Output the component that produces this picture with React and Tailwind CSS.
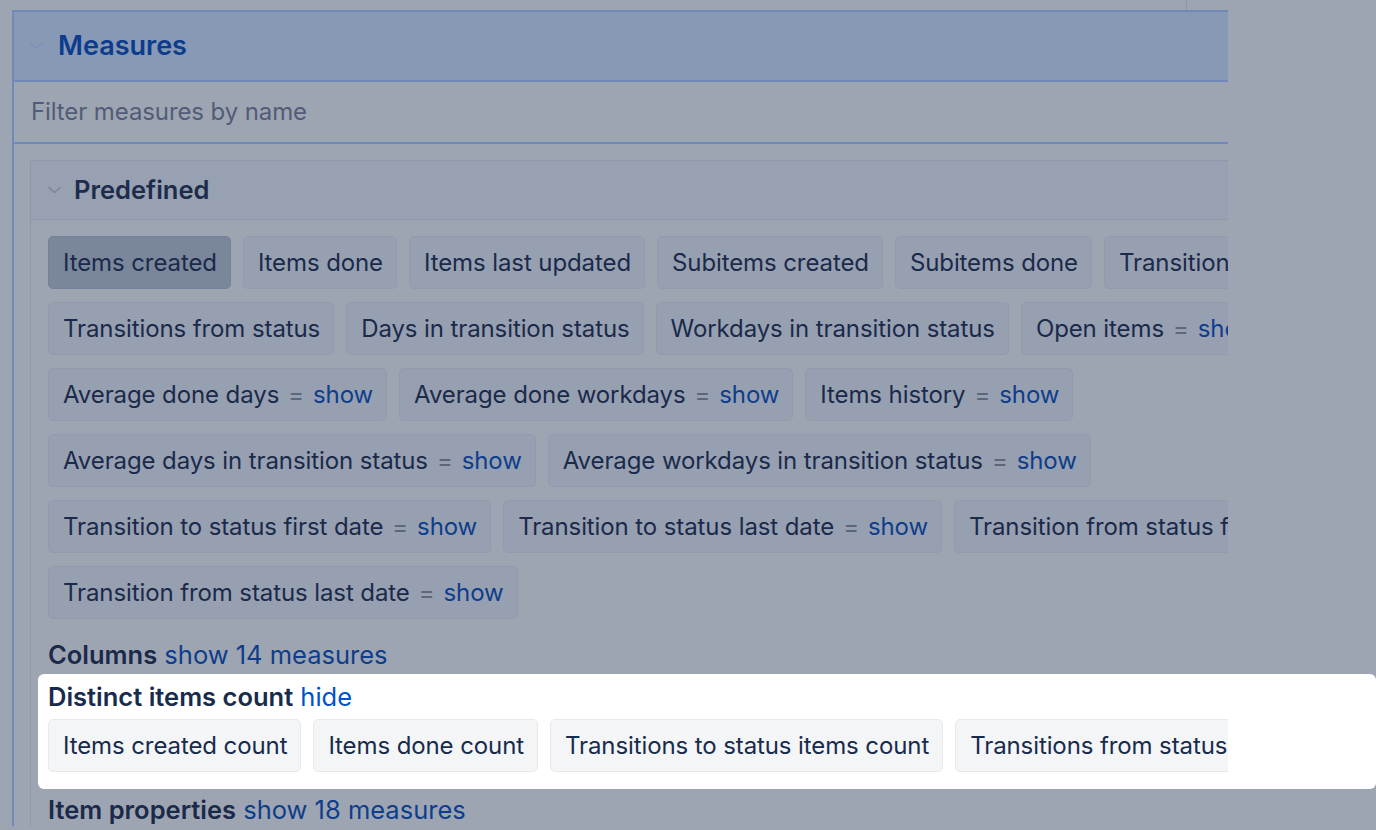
const predefinedRows = [
  [
    { label: 'Items created', active: true },
    { label: 'Items done' },
    { label: 'Items last updated' },
    { label: 'Subitems created' },
    { label: 'Subitems done' },
    { label: 'Transitions to status' },
  ],
  [
    { label: 'Transitions from status' },
    { label: 'Days in transition status' },
    { label: 'Workdays in transition status' },
    { label: 'Open items', show: true },
  ],
  [
    { label: 'Average done days', show: true },
    { label: 'Average done workdays', show: true },
    { label: 'Items history', show: true },
  ],
  [
    { label: 'Average days in transition status', show: true },
    { label: 'Average workdays in transition status', show: true },
  ],
  [
    { label: 'Transition to status first date', show: true },
    { label: 'Transition to status last date', show: true },
    { label: 'Transition from status first date', show: true },
  ],
  [{ label: 'Transition from status last date', show: true }],
]

const distinctItems = [
  'Items created count',
  'Items done count',
  'Transitions to status items count',
  'Transitions from status items count',
]

function Chevron({ className }) {
  return (
    <svg viewBox="0 0 14 8" className={className} fill="none" stroke="currentColor" strokeWidth="1.4" strokeLinecap="round" strokeLinejoin="round">
      <path d="M1 1.2l6 5.6 6-5.6" />
    </svg>
  )
}

function DimChip({ label, active, show }) {
  return (
    <div
      className={`shrink-0 h-[53px] flex items-center pl-[14px] pr-[13px] rounded-[5px] border whitespace-nowrap text-[24px] tracking-[-0.1px] text-[#1b2a4a] ${
        active ? 'bg-[#7a879b] border-[#74819a]' : 'bg-[#97a0b1] border-[#929bad]'
      }`}
    >
      {label}
      {show && (
        <>
          <span className="mx-[9px] text-[#5d677a]">=</span>
          <span className="text-[#0e3d8b]">show</span>
        </>
      )}
    </div>
  )
}

export default function App() {
  return (
    <div
      className="w-full h-[830px] overflow-hidden bg-[#9ea5b2] pl-[12px]"
      style={{ fontFamily: 'Inter, "Noto Sans", sans-serif' }}
    >
      {/* tiny divider peeking from the toolbar above */}
      <div className="h-[10px]">
        <div className="ml-[1174px] w-[1px] h-[10px] bg-[#8e95a2]" />
      </div>

      {/* Measures panel */}
      <div className="w-[1216px] border-l-2 border-t-2 border-[#7189b8]">
        <div className="h-[70px] bg-[#8799b4] flex items-center pl-[16px] gap-[15px] border-b-2 border-[#7189b8]">
          <Chevron className="w-[13px] h-[8px] text-[#7b92bb]" />
          <span className="text-[27px] font-semibold text-[#0c3c8e]">Measures</span>
        </div>
        <div className="h-[62px] flex items-center pl-[17px] border-b-2 border-[#7189b8] text-[24px] tracking-[-0.1px] text-[#515d76]">
          Filter measures by name
        </div>

        {/* Predefined group */}
        <div className="ml-[16px] mt-[16px] border-l border-t border-[#8f99ab]">
          <div className="h-[59px] bg-[#97a1b2] flex items-center pl-[17px] gap-[13px] border-b border-[#8f99ab]">
            <Chevron className="w-[13px] h-[8px] text-[#7b8596]" />
            <span className="text-[25.5px] font-semibold text-[#1d2c4b]">Predefined</span>
          </div>

          <div className="pl-[17px] pt-[16px]">
            <div className="flex flex-col gap-[13px]">
              {predefinedRows.map((row, i) => (
                <div key={i} className="flex gap-[12px] overflow-hidden w-[1180px]">
                  {row.map((chip) => (
                    <DimChip key={chip.label} {...chip} />
                  ))}
                </div>
              ))}
            </div>

            <div className="mt-[19px] text-[25.5px] leading-[33px] text-[#1b2a4a]">
              <span className="font-semibold">Columns</span>{' '}
              <span className="text-[#0e3d8b]">show 14 measures</span>
            </div>

            {/* highlighted group */}
            <div className="-ml-[10px] w-[1338px] mt-[3px] bg-white rounded-[6px] pl-[10px] pt-[6px] pb-[17px]">
              <div className="text-[25.5px] leading-[33px] text-[#172b4d]">
                <span className="font-semibold">Distinct items count</span>{' '}
                <span className="text-[#0052cc]">hide</span>
              </div>
              <div className="mt-[6px] flex gap-[12px] overflow-hidden w-[1180px]">
                {distinctItems.map((label) => (
                  <div
                    key={label}
                    className="shrink-0 h-[53px] flex items-center pl-[14px] pr-[13px] rounded-[5px] border border-[#e8e9ed] bg-[#f4f5f7] whitespace-nowrap text-[24px] tracking-[-0.1px] text-[#172b4d]"
                  >
                    {label}
                  </div>
                ))}
              </div>
            </div>

            <div className="mt-[4px] text-[25.5px] leading-[33px] text-[#1b2a4a]">
              <span className="font-semibold">Item properties</span>{' '}
              <span className="text-[#0e3d8b]">show 18 measures</span>
            </div>
          </div>
        </div>
      </div>
    </div>
  )
}
